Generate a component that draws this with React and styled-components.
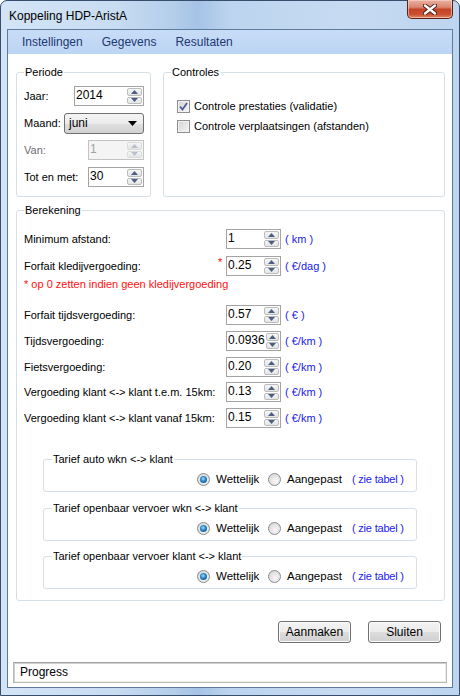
import styled, { createGlobalStyle } from 'styled-components'

const GlobalStyle = createGlobalStyle`
  html, body {
    margin: 0;
    padding: 0;
    background: #ffffff;
  }
  body {
    font-family: "Liberation Sans", Arial, sans-serif;
    font-size: 11px;
    color: #000000;
  }
`

const Window = styled.div`
  box-sizing: border-box;
  width: 460px;
  height: 696px;
  display: flex;
  flex-direction: column;
  padding: 0 6px 7px 6px;
  border: 1px solid #364d6b;
  border-radius: 7px 7px 0 0;
  background: linear-gradient(
    90deg,
    #d3e4f6 0%,
    #c8dcf2 25%,
    #b3cdea 38%,
    #a5c3e6 43%,
    #bcd4ee 50%,
    #c6dbf2 75%,
    #bed5ef 100%
  );
`

const TitleBar = styled.div`
  height: 28px;
  display: flex;
  justify-content: space-between;
  align-items: flex-start;
  flex-shrink: 0;
`

const Title = styled.div`
  padding: 8px 0 0 2px;
  font-size: 12px;
  line-height: 14px;
  color: #000;
`

const CloseButton = styled.div`
  width: 44px;
  height: 18px;
  display: flex;
  align-items: center;
  justify-content: center;
  margin-top: -1px;
  border: 1px solid #5b2218;
  border-top: none;
  border-radius: 0 0 5px 5px;
  background: linear-gradient(
    180deg,
    #eab1a2 0%,
    #da8671 40%,
    #c54428 52%,
    #c9502f 80%,
    #e08a66 100%
  );
  box-shadow: inset 0 0 0 1px rgba(255, 220, 210, 0.55);
`

const Client = styled.div`
  flex: 1;
  display: flex;
  flex-direction: column;
  border: 1px solid #5e7a9c;
  background: #ffffff;
`

const MenuBar = styled.div`
  height: 24px;
  display: flex;
  align-items: center;
  gap: 19px;
  padding-left: 14px;
  background: linear-gradient(180deg, #c7dcf6 0%, #bcd5f4 100%);
  flex-shrink: 0;
`

const MenuItem = styled.span`
  font-size: 12px;
  color: #1f3772;
`

const Content = styled.div`
  flex: 1;
  display: flex;
  flex-direction: column;
  padding: 12px 7px 0 8px;
`

const TopRow = styled.div`
  display: flex;
  gap: 12px;
`

const Group = styled.fieldset`
  box-sizing: border-box;
  margin: 0;
  min-width: 0;
  padding: ${(p) => p.$pad || '0 7px'};
  border: 1px solid #d5dfe5;
  border-radius: 3px;
  width: ${(p) => p.$w || 'auto'};
  height: ${(p) => p.$h || 'auto'};
  flex: ${(p) => (p.$grow ? 1 : 'none')};
  margin-top: ${(p) => p.$mt || 0};
`

const Legend = styled.legend`
  padding: 0 1px;
  font-size: 11px;
  line-height: 13px;
`

const PeriodRow = styled.div`
  display: flex;
  align-items: center;
  justify-content: space-between;
  height: 20px;
  margin-top: ${(p) => p.$mt || '7px'};
  color: ${(p) => (p.$disabled ? '#6d6d6d' : '#000')};
`

const SpinBox = styled.div`
  box-sizing: border-box;
  width: ${(p) => p.$w || '55px'};
  height: 20px;
  display: flex;
  border: 1px solid ${(p) => (p.$disabled ? '#c3c3c3' : '#a4a4a4')};
  background: ${(p) => (p.$disabled ? '#f4f4f4' : '#ffffff')};
`

const SpinValue = styled.span`
  flex: 1;
  padding-left: 1px;
  font-size: 12px;
  line-height: 17px;
  color: ${(p) => (p.$disabled ? '#a3a3a3' : '#000')};
`

const SpinButtons = styled.div`
  width: 15px;
  display: flex;
  flex-direction: column;
  gap: 1px;
  padding: 1px;
`

const SpinHalf = styled.div`
  flex: 1;
  display: flex;
  align-items: center;
  justify-content: center;
  border: 1px solid ${(p) => (p.$disabled ? '#dcdcdc' : '#bcbcbc')};
  border-radius: 2px;
  background: linear-gradient(180deg, #f6f6f6 0%, #e4e4e4 100%);
`

const Select = styled.div`
  box-sizing: border-box;
  width: 80px;
  height: 21px;
  display: flex;
  align-items: center;
  justify-content: space-between;
  padding: 0 6px 0 3px;
  border: 1px solid #707070;
  border-radius: 3px;
  background: linear-gradient(180deg, #f4f4f4 0%, #ececec 50%, #dfdfdf 51%, #d2d2d2 100%);
  font-size: 12px;
`

const SelectText = styled.span`
  padding: 0 1px;
  line-height: 15px;
`

const CheckList = styled.div`
  display: flex;
  flex-direction: column;
  gap: 4px;
  padding: 19px 0 0 6px;
`

const CheckRow = styled.div`
  display: flex;
  align-items: center;
  gap: 4px;
  height: 16px;
`

const CheckBox = styled.div`
  box-sizing: border-box;
  width: 13px;
  height: 13px;
  display: flex;
  align-items: center;
  justify-content: center;
  border: 1px solid #8e8f8f;
  background: linear-gradient(135deg, #d2d2d2 0%, #ececec 70%, #f6f6f6 100%);
  box-shadow: inset 0 0 0 1px #f2f2f2;
`

const FieldRow = styled.div`
  display: grid;
  grid-template-columns: 194px 8px 55px auto;
  align-items: center;
  height: 20px;
  margin-top: ${(p) => p.$mt || '6px'};
`

const Asterisk = styled.span`
  color: #ff0000;
  align-self: start;
  line-height: 12px;
  font-size: 11px;
`

const Unit = styled.span`
  padding-left: 4px;
  color: #1a1aee;
`

const Note = styled.div`
  margin-top: ${(p) => p.$mt || 0};
  color: #ff1010;
  line-height: 13px;
`

const SubGroup = styled.fieldset`
  box-sizing: border-box;
  margin: ${(p) => p.$mt} 20px 0 19px;
  min-width: 0;
  padding: 3px 9px 1px 8px;
  border: 1px solid #d5dfe5;
  border-radius: 3px;
  height: 39px;
`

const RadioRow = styled.div`
  display: flex;
  align-items: center;
  justify-content: flex-end;
  height: 20px;
`

const RadioItem = styled.div`
  display: flex;
  align-items: center;
  gap: 6px;
  width: ${(p) => p.$w};
  font-size: 11.5px;
`

const Radio = styled.div`
  box-sizing: border-box;
  width: 13px;
  height: 13px;
  display: flex;
  align-items: center;
  justify-content: center;
  border: 1px solid #8b8b8b;
  border-radius: 50%;
  background: radial-gradient(circle at 60% 65%, #f8f8f8 0%, #e0e0e0 60%, #cfcfcf 100%);
`

const RadioDot = styled.div`
  width: 7px;
  height: 7px;
  border-radius: 50%;
  background: radial-gradient(circle at 45% 40%, #a7dcf7 0%, #2f8ccc 40%, #135a94 75%, #0c3c66 100%);
`

const LinkText = styled.span`
  width: 55px;
  font-size: 11px;
  letter-spacing: -0.2px;
  white-space: nowrap;
  color: #1a1aee;
`

const ButtonRow = styled.div`
  display: flex;
  justify-content: flex-end;
  gap: 17px;
  margin-top: 20px;
  padding-right: 4px;
`

const Button = styled.button`
  box-sizing: border-box;
  width: 73px;
  height: 22px;
  padding: 0;
  border: 1px solid #707070;
  border-radius: 3px;
  background: linear-gradient(180deg, #f3f3f3 0%, #ebebeb 50%, #dddddd 51%, #cfcfcf 100%);
  box-shadow: inset 0 0 0 1px #fbfbfb;
  font-family: "Liberation Sans", Arial, sans-serif;
  font-size: 12px;
  color: #000;
`

const ProgressBox = styled.div`
  box-sizing: border-box;
  width: 434px;
  height: 21px;
  margin: 19px 0 0 -3px;
  padding-left: 6px;
  border: 1px solid #b9b9b9;
  border-top-color: #a3a3a3;
  box-shadow: inset 1px 1px 0 #cfcfcf, inset -1px -1px 0 #f0f0f0;
  font-size: 12px;
  line-height: 19px;
`

const Arrow = ({ up, disabled }) => (
  <svg width="7" height="4" viewBox="0 0 7 4">
    <path
      d={up ? 'M0 4 L3.5 0 L7 4 Z' : 'M0 0 L3.5 4 L7 0 Z'}
      fill={disabled ? '#b9c0cc' : '#4d5f80'}
    />
  </svg>
)

const Spinner = ({ value, w, disabled }) => (
  <SpinBox $w={w} $disabled={disabled}>
    <SpinValue $disabled={disabled}>{value}</SpinValue>
    <SpinButtons>
      <SpinHalf $disabled={disabled}>
        <Arrow up disabled={disabled} />
      </SpinHalf>
      <SpinHalf $disabled={disabled}>
        <Arrow disabled={disabled} />
      </SpinHalf>
    </SpinButtons>
  </SpinBox>
)

const Field = ({ label, value, unit, star, mt }) => (
  <FieldRow $mt={mt}>
    <span>{label}</span>
    <Asterisk>{star ? '*' : ''}</Asterisk>
    <Spinner value={value} />
    <Unit>{unit}</Unit>
  </FieldRow>
)

const Tarief = ({ title, mt }) => (
  <SubGroup $mt={mt}>
    <Legend>{title}</Legend>
    <RadioRow>
      <RadioItem $w="71px">
        <Radio>
          <RadioDot />
        </Radio>
        Wettelijk
      </RadioItem>
      <RadioItem $w="84px">
        <Radio />
        Aangepast
      </RadioItem>
      <LinkText>( zie tabel )</LinkText>
    </RadioRow>
  </SubGroup>
)

const fields = [
  { label: 'Forfait tijdsvergoeding:', value: '0.57', unit: '( € )', mt: '14px' },
  { label: 'Tijdsvergoeding:', value: '0.0936', unit: '( €/km )', mt: '6px' },
  { label: 'Fietsvergoeding:', value: '0.20', unit: '( €/km )', mt: '6px' },
  { label: 'Vergoeding klant <-> klant t.e.m. 15km:', value: '0.13', unit: '( €/km )', mt: '5px' },
  { label: 'Vergoeding klant <-> klant vanaf 15km:', value: '0.15', unit: '( €/km )', mt: '6px' },
]

const App = () => {
  return (
    <>
      <GlobalStyle />
      <Window>
        <TitleBar>
          <Title>Koppeling HDP-AristA</Title>
          <CloseButton>
            <svg width="14" height="11" viewBox="0 0 14 11">
              <path d="M2 1.5 L12 9.5 M12 1.5 L2 9.5" stroke="#4a1a12" strokeWidth="4.2" strokeLinecap="round" />
              <path d="M2 1.5 L12 9.5 M12 1.5 L2 9.5" stroke="#ffffff" strokeWidth="2.4" strokeLinecap="round" />
            </svg>
          </CloseButton>
        </TitleBar>
        <Client>
          <MenuBar>
            <MenuItem>Instellingen</MenuItem>
            <MenuItem>Gegevens</MenuItem>
            <MenuItem>Resultaten</MenuItem>
          </MenuBar>
          <Content>
            <TopRow>
              <Group $w="135px" $h="131px" $pad="0 6px 0 7px">
                <Legend>Periode</Legend>
                <PeriodRow $mt="7px">
                  Jaar:
                  <Spinner value="2014" w="70px" />
                </PeriodRow>
                <PeriodRow>
                  Maand:
                  <Select>
                    <SelectText>juni</SelectText>
                    <svg width="9" height="5" viewBox="0 0 9 5">
                      <path d="M0 0 L9 0 L4.5 5 Z" fill="#000" />
                    </svg>
                  </Select>
                </PeriodRow>
                <PeriodRow $disabled>
                  Van:
                  <Spinner value="1" w="56px" disabled />
                </PeriodRow>
                <PeriodRow>
                  Tot en met:
                  <Spinner value="30" w="56px" />
                </PeriodRow>
              </Group>
              <Group $grow $h="131px">
                <Legend>Controles</Legend>
                <CheckList>
                  <CheckRow>
                    <CheckBox>
                      <svg width="9" height="9" viewBox="0 0 9 9">
                        <path d="M1 4.5 L3.5 7.5 L8 1" fill="none" stroke="#4d5f95" strokeWidth="1.8" />
                      </svg>
                    </CheckBox>
                    Controle prestaties (validatie)
                  </CheckRow>
                  <CheckRow>
                    <CheckBox />
                    Controle verplaatsingen (afstanden)
                  </CheckRow>
                </CheckList>
              </Group>
            </TopRow>
            <Group $mt="7px" $h="397px" $pad="0 7px 0 7px">
              <Legend>Berekening</Legend>
              <Field label="Minimum afstand:" value="1" unit="( km )" mt="12px" />
              <Field label="Forfait kledijvergoeding:" value="0.25" unit="( €/dag )" star mt="7px" />
              <Note $mt="2px">* op 0 zetten indien geen kledijvergoeding</Note>
              {fields.map((f) => (
                <Field key={f.label} {...f} />
              ))}
              <Tarief title="Tarief auto wkn <-> klant" mt="25px" />
              <Tarief title="Tarief openbaar vervoer wkn <-> klant" mt="10px" />
              <Tarief title="Tarief openbaar vervoer klant <-> klant" mt="9px" />
            </Group>
            <ButtonRow>
              <Button>Aanmaken</Button>
              <Button>Sluiten</Button>
            </ButtonRow>
            <ProgressBox>Progress</ProgressBox>
          </Content>
        </Client>
      </Window>
    </>
  )
}

export default App
